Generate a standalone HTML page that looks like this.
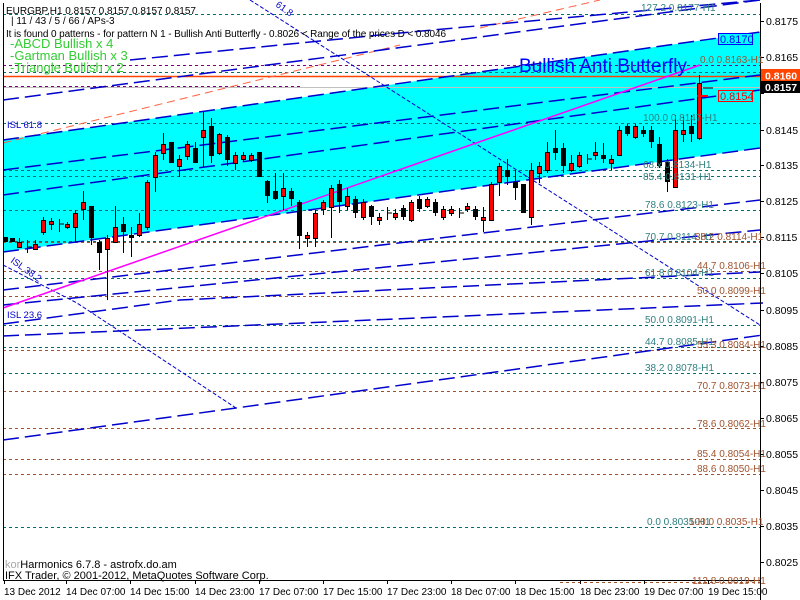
<!DOCTYPE html>
<html><head><meta charset="utf-8"><style>
html,body{margin:0;padding:0;background:#fff;}
body{width:800px;height:600px;overflow:hidden;position:relative;font-family:"Liberation Sans","DejaVu Sans",sans-serif;}
svg{position:absolute;left:0;top:0;}
text{font-family:"Liberation Sans","DejaVu Sans",sans-serif;}
</style></head><body>
<svg width="800" height="600" viewBox="0 0 800 600" xmlns="http://www.w3.org/2000/svg">
<rect width="800" height="600" fill="#fff"/>
<polygon points="3,140 760,32 760,148 3,252" fill="#00ffff"/>
<g stroke-width="1" stroke-dasharray="3,3" fill="none">
<path d="M3 14.5H760" stroke="#007070"/>
<path d="M3 65.5H760" stroke="#800080"/>
<path d="M3 72.5H760" stroke="#007070"/>
<path d="M3 86.5H300" stroke="#800080"/>
<path d="M3 123.5H760" stroke="#007070"/>
<path d="M3 170.5H760" stroke="#007070"/>
<path d="M3 176.5H760" stroke="#007070"/>
<path d="M3 210.5H760" stroke="#007070"/>
<path d="M3 241.5H760" stroke="#007070"/>
<path d="M3 242.5H760" stroke="#a0522d"/>
<path d="M3 271.5H760" stroke="#a0522d"/>
<path d="M3 278.5H760" stroke="#007070"/>
<path d="M3 296.5H760" stroke="#a0522d"/>
<path d="M3 325.5H760" stroke="#007070"/>
<path d="M3 347.5H760" stroke="#007070"/>
<path d="M3 350.5H760" stroke="#a0522d"/>
<path d="M3 373.5H760" stroke="#007070"/>
<path d="M3 391.5H760" stroke="#a0522d"/>
<path d="M3 428.5H760" stroke="#a0522d"/>
<path d="M3 459.5H760" stroke="#a0522d"/>
<path d="M3 474.5H760" stroke="#a0522d"/>
<path d="M3 527.5H760" stroke="#007070"/>
<path d="M560 582.5H760" stroke="#a0522d"/>
</g>
<path d="M3 76.5H760" stroke="#ff4500" stroke-width="1.5"/>
<path d="M3 87.5H760" stroke="#c0c0c0"/>
<path d="M3 143L400 45M480 28L600 0" stroke="#ff6040" stroke-dasharray="8,5" fill="none"/>
<g stroke="#0000cc" stroke-width="1.5" stroke-dasharray="16,6" fill="none">
<path d="M3 140L760 32"/>
<path d="M3 252L760 148"/>
<path d="M3 195L760 90"/>
<path d="M3 100L760 0"/>
<path d="M130 60L400 33L760 0"/>
<path d="M3 290L760 200"/>
<path d="M3 305L760 230"/>
<path d="M3 324L180 300L760 272"/>
<path d="M3 336L763 303"/>
<path d="M3 440L236 408L763 335"/>
<path d="M3 170L760 75"/>
</g>
<g stroke="#0000cc" stroke-width="1" stroke-dasharray="4,2" fill="none">
<path d="M250 0L760 325"/>
<path d="M3 265L77 303L236 408"/>
</g>
<path d="M3 308L700 65" stroke="#ff00ff" stroke-width="1.5" fill="none"/>
<path stroke="#000" stroke-width="1" fill="none" d="
M5.5 237V242M12.5 238V242M19.5 238V248M27.5 240V253M35.5 240V250M43.5 217V235M51.5 218V230M59.5 219V232M67.5 222V229M75.5 210V242M83.5 191V220M91.5 206V245M99.5 240V270M107.5 235V300M115.5 206V243M123.5 217V253M131.5 227V257M139.5 213V237M147.5 180V230M155.5 152V192M163.5 133V160M171.5 142V163M179.5 155V177M187.5 141V160M195.5 142V163M203.5 112V167M211.5 118V163M219.5 133V155M227.5 135V166M235.5 152V170M243.5 152V162M251.5 153V162M259.5 152V177M267.5 180V203M275.5 173V200M283.5 173V210M291.5 188V206M299.5 200V249M307.5 232V247M315.5 210V247M323.5 200V215M331.5 185V238M339.5 180V213M347.5 188V210M355.5 196V218M363.5 199V220M371.5 205V225M379.5 213V225M387.5 207V220M395.5 209V220
M403.5 205V220M411.5 200V222M419.5 196V212M427.5 197V208M435.5 199V216M443.5 206V220M451.5 206V216M459.5 208V218M467.5 203V212M475.5 206V220M483.5 207V232M491.5 182V221M499.5 163V196M507.5 159V185M515.5 170V200M523.5 184V213M531.5 163V225M539.5 162V183M547.5 142V173M555.5 130V160M563.5 143V173M571.5 155V172M579.5 152V168M587.5 154V164M595.5 142V160M603.5 143V163M611.5 155V170M619.5 126V156M627.5 124V136M635.5 124V139M643.5 126V137M651.5 126V148M659.5 137V168M667.5 159V192M675.5 115V188M683.5 115V142M691.5 115V142M699.5 75V140
M27 247H32M59 224H64M387 213H392M459 213H464M587 159H592M703 88H713"/>
<g fill="#ff0000" stroke="#000" stroke-width="1">
<rect x="17.5" y="242.5" width="4" height="5"/><rect x="33.5" y="244.5" width="4" height="5"/><rect x="41.5" y="220.5" width="4" height="12"/><rect x="49.5" y="221.5" width="4" height="3"/><rect x="65.5" y="224.5" width="4" height="3"/><rect x="73.5" y="213.5" width="4" height="14"/><rect x="81.5" y="202.5" width="4" height="7"/><rect x="105.5" y="238.5" width="4" height="11"/><rect x="113.5" y="227.5" width="4" height="15"/><rect x="137.5" y="224.5" width="4" height="11"/><rect x="145.5" y="182.5" width="4" height="45"/><rect x="153.5" y="155.5" width="4" height="22"/><rect x="161.5" y="144.5" width="4" height="9"/><rect x="177.5" y="159.5" width="4" height="7"/><rect x="185.5" y="144.5" width="4" height="12"/><rect x="201.5" y="130.5" width="4" height="7"/><rect x="217.5" y="134.5" width="4" height="19"/><rect x="233.5" y="155.5" width="4" height="8"/><rect x="241.5" y="155.5" width="4" height="4"/><rect x="249.5" y="155.5" width="4" height="5"/><rect x="281.5" y="188.5" width="4" height="8"/><rect x="305.5" y="235.5" width="4" height="3"/><rect x="313.5" y="213.5" width="4" height="25"/><rect x="321.5" y="202.5" width="4" height="7"/><rect x="329.5" y="188.5" width="4" height="19"/><rect x="345.5" y="196.5" width="4" height="10"/><rect x="361.5" y="202.5" width="4" height="15"/><rect x="377.5" y="217.5" width="4" height="3"/><rect x="393.5" y="213.5" width="4" height="4"/>
<rect x="409.5" y="202.5" width="4" height="18"/><rect x="425.5" y="199.5" width="4" height="7"/><rect x="441.5" y="209.5" width="4" height="8"/><rect x="449.5" y="209.5" width="4" height="4"/><rect x="465.5" y="206.5" width="4" height="3"/><rect x="481.5" y="217.5" width="4" height="3"/><rect x="489.5" y="184.5" width="4" height="36"/><rect x="497.5" y="166.5" width="4" height="16"/><rect x="529.5" y="170.5" width="4" height="47"/><rect x="537.5" y="166.5" width="4" height="7"/><rect x="545.5" y="152.5" width="4" height="18"/><rect x="569.5" y="163.5" width="4" height="7"/><rect x="577.5" y="155.5" width="4" height="11"/><rect x="593.5" y="152.5" width="4" height="3"/><rect x="609.5" y="159.5" width="4" height="4"/><rect x="617.5" y="130.5" width="4" height="25"/><rect x="633.5" y="126.5" width="4" height="11"/><rect x="673.5" y="130.5" width="4" height="57"/><rect x="681.5" y="130.5" width="4" height="4"/><rect x="697.5" y="83.5" width="4" height="55"/>
</g>
<g fill="#000">
<rect x="3" y="237" width="5" height="5"/><rect x="10" y="238" width="5" height="4"/><rect x="89" y="206" width="5" height="32"/><rect x="97" y="242" width="5" height="11"/><rect x="121" y="224" width="5" height="8"/><rect x="129" y="235" width="5" height="3"/><rect x="169" y="142" width="5" height="21"/><rect x="193" y="148" width="5" height="15"/><rect x="209" y="126" width="5" height="30"/><rect x="225" y="137" width="5" height="23"/><rect x="257" y="152" width="5" height="25"/><rect x="265" y="181" width="5" height="15"/><rect x="273" y="191" width="5" height="8"/><rect x="289" y="191" width="5" height="8"/><rect x="297" y="202" width="5" height="34"/><rect x="337" y="184" width="5" height="18"/><rect x="353" y="199" width="5" height="14"/><rect x="369" y="206" width="5" height="11"/>
<rect x="401" y="208" width="5" height="9"/><rect x="417" y="199" width="5" height="10"/><rect x="433" y="202" width="5" height="11"/><rect x="473" y="209" width="5" height="8"/><rect x="505" y="170" width="5" height="7"/><rect x="513" y="182" width="5" height="6"/><rect x="521" y="184" width="5" height="29"/><rect x="553" y="148" width="5" height="5"/><rect x="561" y="148" width="5" height="18"/><rect x="601" y="155" width="5" height="4"/><rect x="625" y="126" width="5" height="8"/><rect x="641" y="130" width="5" height="4"/><rect x="649" y="130" width="5" height="12"/><rect x="657" y="144" width="5" height="22"/><rect x="665" y="162" width="5" height="20"/><rect x="689" y="126" width="5" height="8"/>
</g>
<path d="M697 96H708" stroke="#ff0000" stroke-width="2"/>
<path d="M3.5 3V580M760.5 3V600M3 580.5H760" stroke="#000" fill="none"/>
<path d="M760 21.5h4M760 57.5h4M760 93.5h4M760 130.5h4M760 165.5h4M760 201.5h4M760 237.5h4M760 273.5h4M760 310.5h4M760 346.5h4M760 382.5h4M760 418.5h4M760 454.5h4M760 490.5h4M760 526.5h4M760 562.5h4" stroke="#000"/>
<g font-size="10.5" fill="#000">
<text x="766" y="25">0.8175</text><text x="766" y="61">0.8165</text><text x="766" y="134">0.8145</text><text x="766" y="169">0.8135</text><text x="766" y="205">0.8125</text><text x="766" y="241">0.8115</text><text x="766" y="277">0.8105</text><text x="766" y="314">0.8095</text><text x="766" y="350">0.8085</text><text x="766" y="386">0.8075</text><text x="766" y="422">0.8065</text><text x="766" y="458">0.8055</text><text x="766" y="494">0.8045</text><text x="766" y="530">0.8035</text><text x="766" y="566">0.8025</text>
</g>
<rect x="761" y="69" width="39" height="13" fill="#ff4500"/>
<text x="765" y="79.5" font-size="10.5" fill="#fff" font-weight="bold">0.8160</text>
<rect x="761" y="81" width="39" height="12" fill="#000"/>
<text x="765" y="91" font-size="10.5" fill="#fff" font-weight="bold">0.8157</text>
<rect x="718.5" y="33.5" width="34" height="11" fill="#00ffff" stroke="#0000ff"/>
<text x="720" y="43" font-size="11" fill="#0000ff">0.8170</text>
<rect x="718.5" y="90.5" width="34" height="11" fill="#00ffff" stroke="#ff0000"/>
<text x="720" y="100" font-size="11" fill="#ff0000">0.8154</text>
<g font-size="10" fill="#2f8080">
<text x="641" y="11">127.2 0.8177-H1</text>
<text x="643" y="121">100.0 0.8147-H1</text>
<text x="643" y="168">68.x 0.8134-H1</text>
<text x="643" y="180">85.4 0.8131-H1</text>
<text x="645" y="208">78.6 0.8123-H1</text>
<text x="645" y="240">70.7 0.8114-H1</text>
<text x="645" y="276">61.8 0.8104-H1</text>
<text x="645" y="323">50.0 0.8091-H1</text>
<text x="645" y="345">44.7 0.8085-H1</text>
<text x="645" y="371">38.2 0.8078-H1</text>
<text x="647" y="525">0.0 0.8035-H1</text>
</g>
<g font-size="10" fill="#a0522d">
<text x="700" y="63">0.0 0.8163-H1</text>
<text x="695" y="240">38.2 0.8114-H1</text>
<text x="697" y="269">44.7 0.8106-H1</text>
<text x="697" y="294">50.0 0.8099-H1</text>
<text x="697" y="348">55.3 0.8084-H1</text>
<text x="697" y="389">70.7 0.8073-H1</text>
<text x="697" y="427">78.6 0.8062-H1</text>
<text x="697" y="457">85.4 0.8054-H1</text>
<text x="697" y="472">88.6 0.8050-H1</text>
<text x="689" y="525">100.0 0.8035-H1</text>
<text x="692" y="584">112.8 0.8019-H1</text>
</g>
<g font-size="9.5" fill="#0000cc">
<text x="7" y="128">ISL 61.8</text>
<text x="7" y="318">ISL 23.6</text>
<text x="10" y="262" transform="rotate(35 10 262)">ISL 38.2</text>
<text x="275" y="6" transform="rotate(35 275 6)">61.8</text>
</g>
<g font-size="10" fill="#000">
<text x="6" y="14">EURGBP,H1  0.8157 0.8157 0.8157 0.8157</text>
<text x="11" y="24">| 11 / 43 / 5 / 66 / APs-3</text>
<text x="6" y="37" textLength="440">It is found 0 patterns  -  for pattern N 1 - Bullish Anti Butterfly  - 0.8026 &lt; Range of the prices D &lt; 0.8046</text>
</g>
<g font-size="13" fill="#33cc33">
<text x="10" y="48">-ABCD Bullish x 4</text>
<text x="10" y="60">-Gartman Bullish x 3</text>
<text x="10" y="72">-Triangle Bullish x 2</text>
</g>
<text x="519" y="72" font-size="19" fill="#0000ff">Bullish Anti Butterfly</text>
<text x="5" y="568" font-size="11" fill="#000"><tspan fill="#aaa">kor</tspan>Harmonics 6.7.8 - astrofx.do.am</text>
<text x="5" y="579" font-size="11" fill="#000">IFX Trader, © 2001-2012, MetaQuotes Software Corp.</text>
<path d="M4.5 580v4M66.5 580v4M130.5 580v4M195.5 580v4M259.5 580v4M323.5 580v4M387.5 580v4M451.5 580v4M515.5 580v4M580.5 580v4M644.5 580v4M708.5 580v4" stroke="#000"/>
<g font-size="10" fill="#000">
<text x="4" y="595">13 Dec 2012</text><text x="66" y="595">14 Dec 07:00</text><text x="130" y="595">14 Dec 15:00</text><text x="195" y="595">14 Dec 23:00</text><text x="259" y="595">17 Dec 07:00</text><text x="323" y="595">17 Dec 15:00</text><text x="387" y="595">17 Dec 23:00</text><text x="451" y="595">18 Dec 07:00</text><text x="515" y="595">18 Dec 15:00</text><text x="580" y="595">18 Dec 23:00</text><text x="644" y="595">19 Dec 07:00</text><text x="708" y="595">19 Dec 15:00</text>
</g>
</svg>
</body></html>
